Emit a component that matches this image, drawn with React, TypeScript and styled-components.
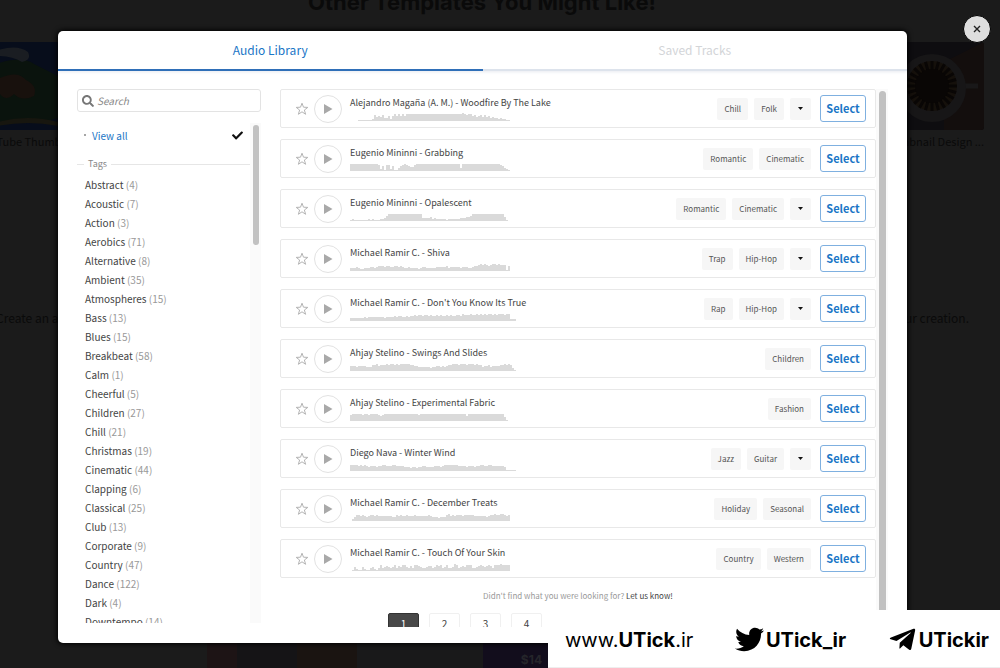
import React from "react";
import styled, { createGlobalStyle } from "styled-components";
import { FaTwitter, FaTelegramPlane, FaSearch, FaCheck } from "react-icons/fa";

const GlobalStyle = createGlobalStyle`
  *, *::before, *::after { box-sizing: border-box; }
  html, body { margin: 0; height: 100%; background: #1b1b1b; }
  body { font-family: "Noto Sans CJK SC", "Open Sans", sans-serif; color: #444; }
  button, input { font: inherit; color: inherit; }
  ul { margin: 0; padding: 0; list-style: none; }
`;

/* ---------- page behind the dialog ---------- */

const Backdrop = styled.div`
  position: fixed;
  inset: 0;
  overflow: hidden;
  display: flex;
  flex-direction: column;
  background: #1b1b1b;
  color: #0a0a0a;
`;

const PageTitle = styled.h2`
  margin: -12px 36px 0 0;
  font: 700 22px/28px Inter, sans-serif;
  text-align: center;
`;

const CardRow = styled.div`
  display: flex;
  justify-content: space-between;
  margin: 26px 16px 0 -22px;
`;

const Card = styled.figure`
  margin: 0;
  width: 160px;
  svg { display: block; width: 100%; height: 88px; border-radius: 3px; }
`;

const Caption = styled.figcaption<{ $end?: boolean }>`
  font-size: 11px;
  line-height: 22px;
  white-space: nowrap;
  text-align: ${(p) => (p.$end ? "right" : "left")};
`;

const PageText = styled.p`
  display: flex;
  justify-content: space-between;
  margin: 156px 31px 0 -4px;
  font-size: 12px;
  line-height: 20px;
`;

const FooterArt = styled.div`
  display: flex;
  margin: auto 0 0 207px;
  height: 26px;
`;

const ArtBlock = styled.div<{ $bg: string; $w: number }>`
  width: ${(p) => p.$w}px;
  background: ${(p) => p.$bg};
  color: #25252a;
  font: 700 12px/36px Inter, sans-serif;
  text-align: right;
  padding-right: 6px;
  overflow: hidden;
`;

/* ---------- dialog ---------- */

const Overlay = styled.div`
  position: fixed;
  inset: 0;
  padding: 31px 93px 25px 58px;
  display: flex;
`;

const Dialog = styled.section`
  flex: 1;
  min-width: 0;
  display: flex;
  flex-direction: column;
  background: #fff;
  border-radius: 5px;
  box-shadow: 0 0 5px 1px #000;
  overflow: hidden;
`;

const Tabs = styled.div`
  display: flex;
  flex: none;
  height: 40px;
  box-shadow: 0 1px 3px #e8ebf0;
`;

const Tab = styled.button<{ $active?: boolean }>`
  flex: 1;
  padding: 0;
  border: 0;
  border-bottom: ${(p) => (p.$active ? "2px solid #2f6fb8" : "2px solid #dde3ec")};
  background: none;
  font-size: 12px;
  line-height: 36px;
  color: ${(p) => (p.$active ? "#1b76c6" : "#d3d5d8")};
`;

const Body = styled.div`
  flex: 1;
  min-height: 0;
  display: flex;
  gap: 19px;
  padding: 18px 19px 16px;
`;

const Sidebar = styled.aside`
  flex: none;
  width: 184px;
  display: flex;
  flex-direction: column;
  padding-bottom: 4px;
`;

const SearchBox = styled.label`
  display: flex;
  align-items: center;
  gap: 3px;
  flex: none;
  height: 23px;
  padding: 0 4px;
  border: 1px solid #e3e3e3;
  border-radius: 3px;
  color: #777;
  svg { width: 12px; height: 12px; flex: none; }
`;

const SearchInput = styled.input`
  flex: 1;
  min-width: 0;
  padding: 0;
  border: 0;
  outline: 0;
  background: none;
  font-size: 10px;
  line-height: 18px;
  font-style: italic;
  &::placeholder { color: #888; opacity: 1; }
`;

const Scroller = styled.div`
  flex: 1;
  min-width: 0;
  min-height: 0;
  display: flex;
`;

const SideScroller = styled(Scroller)`
  margin-top: 11px;
`;

const ScrollPane = styled.div`
  flex: 1;
  min-width: 0;
  overflow: hidden;
`;

const Track = styled.div<{ $w: number }>`
  flex: none;
  width: ${(p) => p.$w}px;
  padding: 2px 2px 2px 3px;
  background: #fafafa;
`;

const Thumb = styled.div<{ $h: string }>`
  height: ${(p) => p.$h};
  border-radius: 4px;
  background: #c1c1c1;
`;

const ViewAll = styled.button`
  display: flex;
  align-items: center;
  gap: 6px;
  width: 100%;
  height: 24px;
  padding: 0 7px;
  border: 0;
  background: none;
  font-size: 10px;
  color: #1b76c6;
  svg { margin-left: auto; width: 11px; height: 11px; color: #111; }
`;

const Dot = styled.span`
  width: 2px;
  height: 2px;
  border-radius: 1px;
  background: #888;
`;

const TagsHeading = styled.h3`
  display: flex;
  align-items: center;
  gap: 4px;
  margin: 9px 0 3px;
  font-size: 9px;
  line-height: 16px;
  font-weight: 400;
  color: #888;
  &::before, &::after { content: ""; height: 1px; background: #e6e6e6; }
  &::before { width: 7px; }
  &::after { flex: 1; }
`;

const TagItem = styled.li`
  padding-left: 8px;
  font-size: 10px;
  line-height: 19px;
  white-space: nowrap;
  span { color: #999; }
`;

const TrackList = styled.ul`
  display: flex;
  flex-direction: column;
  gap: 11px;
`;

const Row = styled.li`
  display: flex;
  align-items: center;
  height: 39px;
  padding: 0 9px 0 13px;
  border: 1px solid #e8e8e8;
  border-radius: 2px;
`;

const StarButton = styled.button`
  display: flex;
  padding: 1px;
  border: 0;
  background: none;
  svg { width: 14px; height: 14px; }
`;

const PlayButton = styled.button`
  display: flex;
  align-items: center;
  justify-content: center;
  flex: none;
  width: 28px;
  height: 28px;
  margin: 0 8px 0 4px;
  padding: 0;
  border: 1px solid #e2e2e2;
  border-radius: 50%;
  background: #fff;
  svg { width: 10px; height: 12px; }
`;

const Info = styled.div`
  flex: 1;
  min-width: 0;
`;

const Title = styled.div`
  font-size: 9px;
  line-height: 16px;
  white-space: nowrap;
`;

const WaveSvg = styled.svg`
  display: block;
  width: 170px;
  height: 8px;
  margin: 2px 0 1px;
`;

const Chips = styled.div`
  display: flex;
  gap: 6px;
  margin-right: 9px;
`;

const Chip = styled.span`
  padding: 0 7px;
  border-radius: 2px;
  background: #f6f6f6;
  font-size: 8px;
  line-height: 22px;
  color: #555;
  white-space: nowrap;
`;

const MoreButton = styled.button`
  display: flex;
  align-items: center;
  justify-content: center;
  width: 21px;
  height: 22px;
  padding: 0;
  border: 0;
  border-radius: 2px;
  background: #f6f6f6;
  svg { width: 5px; height: 3px; }
`;

const SelectButton = styled.button`
  flex: none;
  width: 46px;
  height: 27px;
  padding: 0;
  border: 1px solid #7fb0e0;
  border-radius: 3px;
  background: #fff;
  font-size: 11px;
  line-height: 25px;
  font-weight: 700;
  color: #1b76c6;
`;

const Note = styled.p`
  margin: 10px 0 9px;
  font-size: 8px;
  line-height: 16px;
  text-align: center;
  color: #999;
  a { color: #444; text-decoration: none; }
`;

const Pages = styled.nav`
  display: flex;
  gap: 10px;
  padding-left: 108px;
`;

const PageButton = styled.button<{ $active?: boolean }>`
  width: 31px;
  height: 22px;
  padding: 0;
  border: 1px solid ${(p) => (p.$active ? "#333" : "#f0f0f0")};
  border-radius: 2px;
  background: ${(p) => (p.$active ? "#484848" : "#fff")};
  color: ${(p) => (p.$active ? "#fff" : "#444")};
  font-size: 10px;
  line-height: 20px;
`;

const CloseButton = styled.button`
  position: fixed;
  top: 15px;
  right: 9px;
  display: flex;
  align-items: center;
  justify-content: center;
  width: 28px;
  height: 28px;
  padding: 0;
  border: 1px solid #000;
  border-radius: 50%;
  background: #dedede;
  svg { width: 8px; height: 8px; }
`;

const Banner = styled.footer`
  position: fixed;
  right: 0;
  bottom: 0;
  display: flex;
  align-items: center;
  justify-content: space-between;
  width: 452px;
  height: 58px;
  padding: 2px 11px 0 17px;
  border-bottom: 1px solid #eee;
  background: #fff;
`;

const BannerLink = styled.a`
  display: flex;
  align-items: center;
  gap: 2px;
  font: 400 20px/30px Inter, sans-serif;
  color: #000;
  text-decoration: none;
  b { font-weight: 700; }
  svg { width: 29px; height: 29px; }
`;

/* ---------- data ---------- */

const tags: [string, number][] = [
  ["Abstract", 4], ["Acoustic", 7], ["Action", 3], ["Aerobics", 71], ["Alternative", 8],
  ["Ambient", 35], ["Atmospheres", 15], ["Bass", 13], ["Blues", 15], ["Breakbeat", 58],
  ["Calm", 1], ["Cheerful", 5], ["Children", 27], ["Chill", 21], ["Christmas", 19],
  ["Cinematic", 44], ["Clapping", 6], ["Classical", 25], ["Club", 13], ["Corporate", 9],
  ["Country", 47], ["Dance", 122], ["Dark", 4], ["Downtempo", 14],
];

interface TrackData {
  title: string;
  chips: string[];
  more?: boolean;
  wave: string;
}

/* Each digit of a wave is the height of one 2px wide bar. */
const tracks: TrackData[] = [
  { title: "Alejandro Magaña (A. M.) - Woodfire By The Lake", chips: ["Chill", "Folk"], more: true,
    wave: "00001111111264546335257575757777777777777777777777777777876775645646453433232211" },
  { title: "Eugenio Mininni - Grabbing", chips: ["Romantic", "Cinematic"],
    wave: "77777777777777625166251135676544677777777777777777777773777777777777777777765321" },
  { title: "Eugenio Mininni - Opalescent", chips: ["Romantic", "Cinematic"], more: true,
    wave: "1211111112121112235777777777777777773333423222221222222333445777777777777777741" },
  { title: "Michael Ramir C. - Shiva", chips: ["Trap", "Hip-Hop"], more: true,
    wave: "33343223334434555455445545433433332344333334444453444443444334556767656776766615" },
  { title: "Michael Ramir C. - Don't You Know Its True", chips: ["Rap", "Hip-Hop"], more: true,
    wave: "33333334344444444344445455445455656656656556565565655665766676676767677676777677222" },
  { title: "Ahjay Stelino - Swings And Slides", chips: ["Children"],
    wave: "55545555444667566676776767777766554444443445545456677767776777676645564555566767631" },
  { title: "Ahjay Stelino - Experimental Fabric", chips: ["Fashion"],
    wave: "6777776776777765677777777777777777677777777777777777777777577777777777777777741" },
  { title: "Diego Nava - Winter Wind", chips: ["Jazz", "Guitar"], more: true,
    wave: "66665656545554556655566555544434434455444455545666666655554555455665566555555411111" },
  { title: "Michael Ramir C. - December Treats", chips: ["Holiday", "Seasonal"],
    wave: "02466565456656555555544656556555655555565444344467565666566666555555456676677656" },
  { title: "Michael Ramir C. - Touch Of Your Skin", chips: ["Country", "Western"],
    wave: "01421142113421363454346354664353665433455346563463347634546663345654565366676666" },
];

/* ---------- drawings ---------- */

const Wave = ({ levels }: { levels: string }) => {
  const d = levels
    .split("")
    .map((n, i) => `L${i * 2} ${8 - Number(n)}h2`)
    .join("");
  return (
    <WaveSvg viewBox="0 0 170 8" aria-hidden="true">
      <path d={`M0 8${d}V8z`} fill="#dadada" />
    </WaveSvg>
  );
};

const Star = () => (
  <svg viewBox="0 0 14 14" aria-hidden="true">
    <path d="M7 1.2 8.5 5.2 12.8 5.4 9.4 8 10.6 12.3 7 9.8 3.4 12.3 4.6 8 1.2 5.4 5.5 5.2z" fill="none" stroke="#b4b4b4" strokeWidth="1" strokeLinejoin="round" />
  </svg>
);

const Play = () => (
  <svg viewBox="0 0 10 12" aria-hidden="true">
    <path d="M1 1 9.5 6 1 11z" fill="#a9a9a9" />
  </svg>
);

const Caret = () => (
  <svg viewBox="0 0 5 3" aria-hidden="true">
    <path d="M0 0h5L2.5 3z" fill="#111" />
  </svg>
);

const Cross = () => (
  <svg viewBox="0 0 8 8" aria-hidden="true">
    <path d="M1 1l6 6M7 1 1 7" stroke="#222" strokeWidth="1.4" />
  </svg>
);

const GameArt = () => (
  <svg viewBox="0 0 160 88" preserveAspectRatio="none" aria-hidden="true">
    <rect width="160" height="88" fill="#070d1b" />
    <path d="M0 30Q40 10 56 22L80 34V76Q50 86 0 76z" fill="#0a130d" />
    <path d="M20 8Q40 2 50 10 54 18 44 20 34 14 20 14z" fill="#1a1d22" />
    <path d="M22 36Q40 28 48 38 60 44 56 54 44 60 36 52 28 60 22 52z" fill="#18110d" />
    <path d="M20 80Q50 72 80 80V84Q50 78 20 84z" fill="#17160f" />
  </svg>
);

const petals = Array.from({ length: 24 }, (_, i) => i * 15);

const CoffeeArt = () => (
  <svg viewBox="0 0 160 88" aria-hidden="true">
    <rect width="160" height="88" fill="#0e0d10" />
    <path d="M120 20 160 0V88H120z" fill="#130e0d" />
    <path d="M136 44h18" stroke="#191819" strokeWidth="5" />
    <circle cx="108" cy="46" r="34" fill="#171617" />
    <circle cx="108" cy="44" r="25" fill="#15100b" />
    {petals.map((a) => (
      <path key={a} d="M108 19v10" stroke="#090605" strokeWidth="3" transform={`rotate(${a} 108 44)`} />
    ))}
    <circle cx="108" cy="44" r="17" fill="#090605" />
  </svg>
);

/* ---------- page ---------- */

const TrackRow = ({ track }: { track: TrackData }) => (
  <Row>
    <StarButton aria-label="Save track"><Star /></StarButton>
    <PlayButton aria-label="Play"><Play /></PlayButton>
    <Info>
      <Title>{track.title}</Title>
      <Wave levels={track.wave} />
    </Info>
    <Chips>
      {track.chips.map((c) => <Chip key={c}>{c}</Chip>)}
      {track.more && <MoreButton aria-label="More tags"><Caret /></MoreButton>}
    </Chips>
    <SelectButton>Select</SelectButton>
  </Row>
);

export default function App() {
  return (
    <>
      <GlobalStyle />
      <Backdrop>
        <PageTitle>Other Templates You Might Like!</PageTitle>
        <CardRow>
          <Card>
            <GameArt />
            <Caption>YouTube Thumbnail</Caption>
          </Card>
          <Card>
            <CoffeeArt />
            <Caption $end>Thumbnail Design ...</Caption>
          </Card>
        </CardRow>
        <PageText>
          <span>Create an account</span>
          <span>your creation.</span>
        </PageText>
        <FooterArt>
          <ArtBlock $bg="#1d1415" $w={30} />
          <ArtBlock $bg="#151416" $w={60} />
          <ArtBlock $bg="#1a1411" $w={60} />
          <ArtBlock $bg="#19191a" $w={126} />
          <ArtBlock $bg="#120d1c" $w={65}>$14</ArtBlock>
        </FooterArt>
      </Backdrop>

      <Overlay>
        <Dialog role="dialog" aria-label="Audio Library">
          <Tabs role="tablist">
            <Tab role="tab" aria-selected="true" $active>Audio Library</Tab>
            <Tab role="tab" aria-selected="false">Saved Tracks</Tab>
          </Tabs>
          <Body>
            <Sidebar>
              <SearchBox>
                <FaSearch aria-hidden="true" />
                <SearchInput type="text" placeholder="Search" aria-label="Search" />
              </SearchBox>
              <SideScroller>
                <ScrollPane>
                  <ViewAll><Dot />View all<FaCheck aria-hidden="true" /></ViewAll>
                  <TagsHeading>Tags</TagsHeading>
                  <ul>
                    {tags.map(([name, count]) => (
                      <TagItem key={name}>{name} <span>({count})</span></TagItem>
                    ))}
                  </ul>
                </ScrollPane>
                <Track $w={11}><Thumb $h="120px" /></Track>
              </SideScroller>
            </Sidebar>
            <Scroller as="main">
              <ScrollPane>
                <TrackList>
                  {tracks.map((t) => <TrackRow key={t.title} track={t} />)}
                </TrackList>
                <Note>Didn't find what you were looking for? <a href="#contact">Let us know!</a></Note>
                <Pages aria-label="Pages">
                  {[1, 2, 3, 4].map((n) => <PageButton key={n} $active={n === 1}>{n}</PageButton>)}
                </Pages>
              </ScrollPane>
              <Track $w={12}><Thumb $h="98%" /></Track>
            </Scroller>
          </Body>
        </Dialog>
      </Overlay>

      <CloseButton aria-label="Close"><Cross /></CloseButton>

      <Banner>
        <BannerLink href="#site"><span>www.<b>UTick</b>.ir</span></BannerLink>
        <BannerLink href="#twitter"><FaTwitter aria-hidden="true" /><b>UTick_ir</b></BannerLink>
        <BannerLink href="#telegram"><FaTelegramPlane aria-hidden="true" /><b>UTickir</b></BannerLink>
      </Banner>
    </>
  );
}
